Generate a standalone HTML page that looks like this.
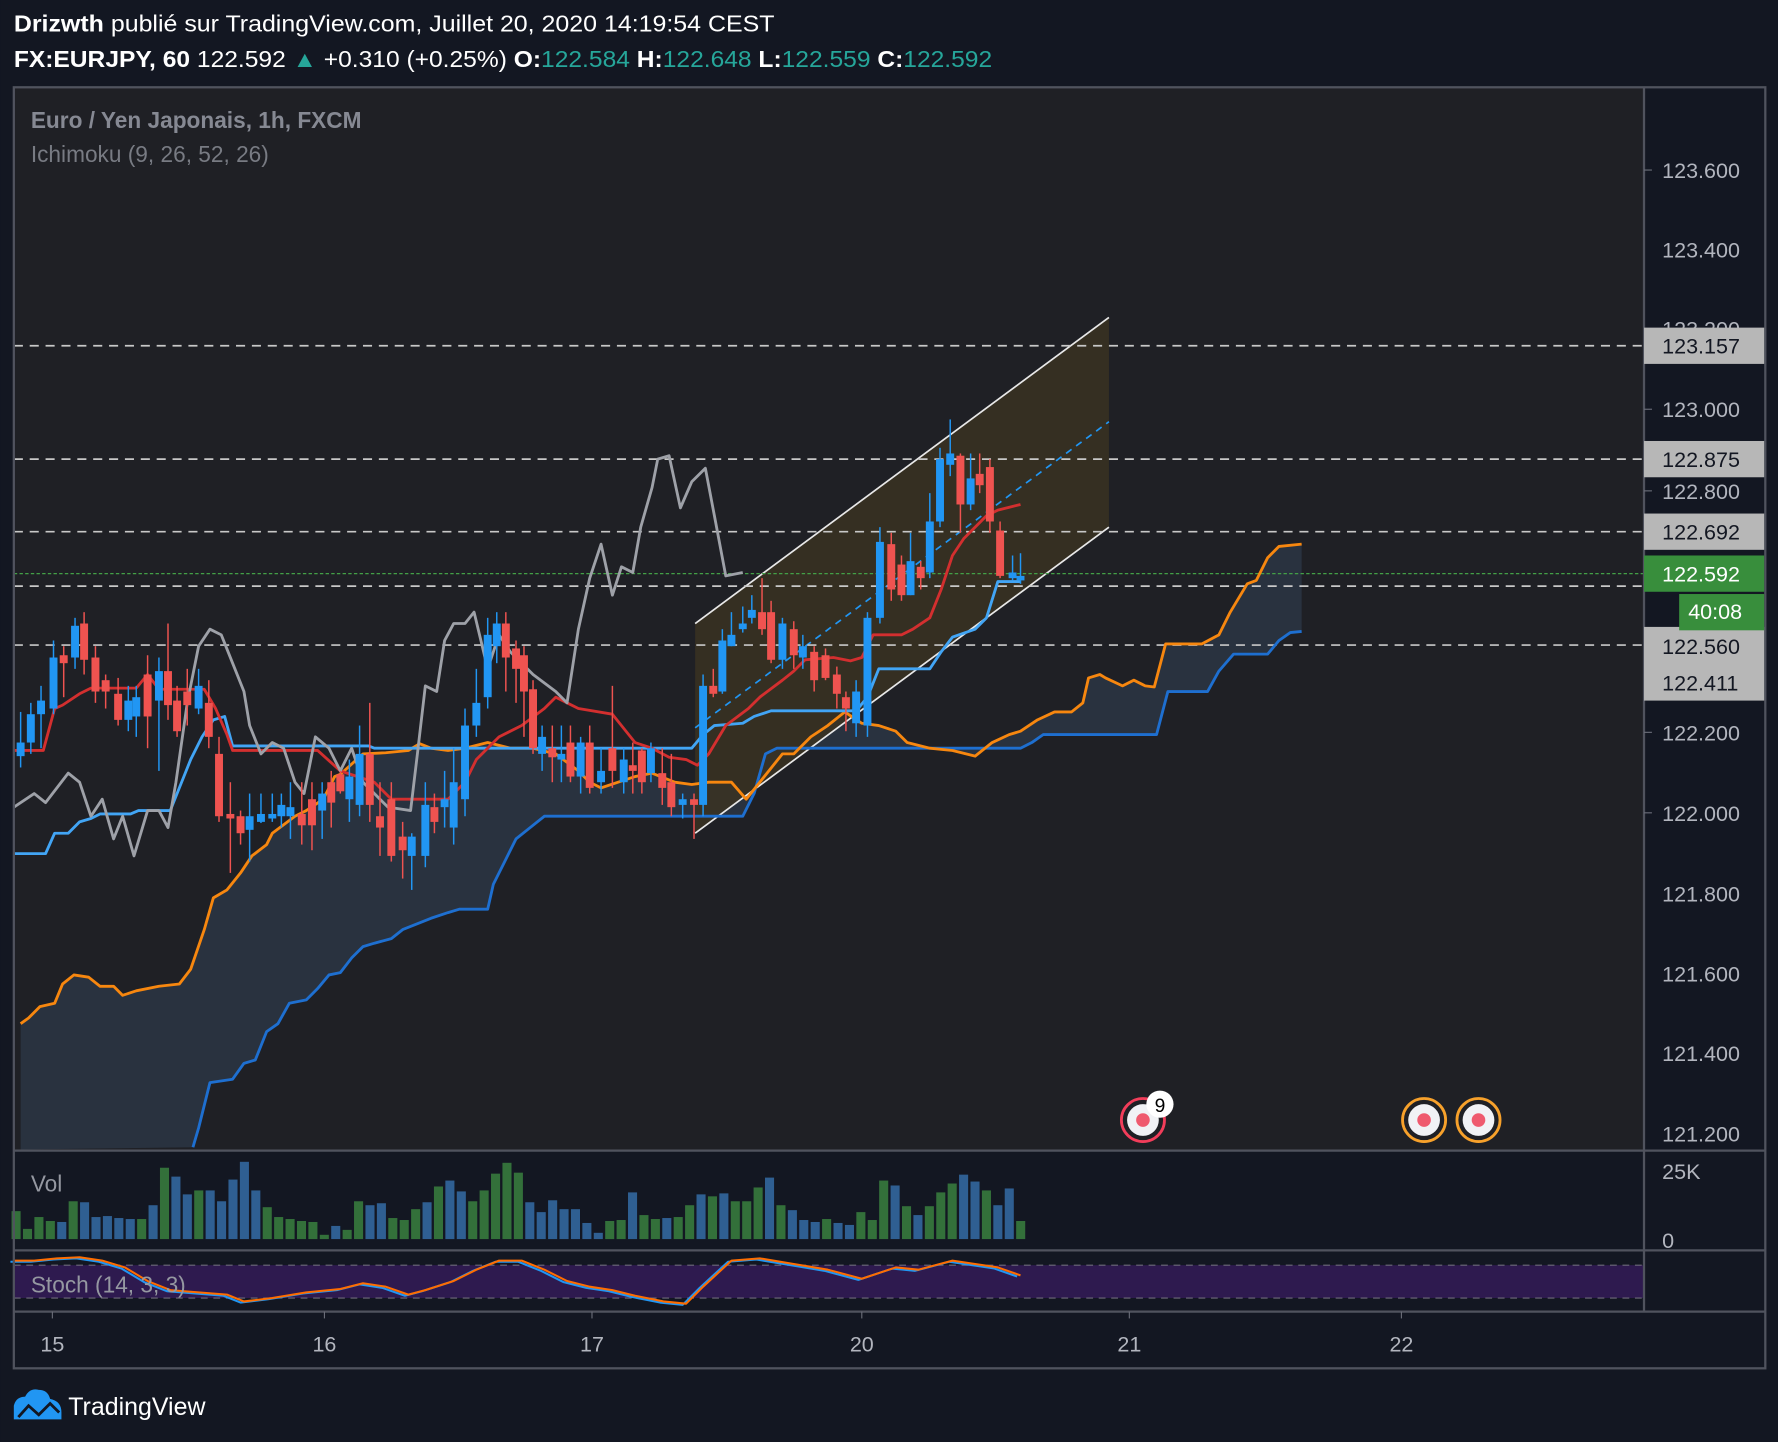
<!DOCTYPE html>
<html><head><meta charset="utf-8"><style>
html,body{margin:0;padding:0;background:#131722;width:1778px;height:1442px;overflow:hidden}
svg{display:block}
text{font-family:"Liberation Sans",sans-serif}
</style></head><body>
<svg id="s" width="1778" height="1442" viewBox="0 0 1568 1272" xmlns="http://www.w3.org/2000/svg">
<rect width="1568" height="1272" fill="#131722"/>
<text x="12" y="28" font-size="20" fill="#fff" textLength="671" lengthAdjust="spacingAndGlyphs"><tspan font-weight="bold">Drizwth</tspan> publié sur TradingView.com, Juillet 20, 2020 14:19:54 CEST</text>
<text x="12" y="59" font-size="20" fill="#fff" textLength="863" lengthAdjust="spacingAndGlyphs"><tspan font-weight="bold">FX:EURJPY, 60</tspan> 122.592 <tspan fill="#26a69a">▲</tspan> +0.310 (+0.25%) <tspan font-weight="bold">O:</tspan><tspan fill="#26a69a">122.584</tspan> <tspan font-weight="bold">H:</tspan><tspan fill="#26a69a">122.648</tspan> <tspan font-weight="bold">L:</tspan><tspan fill="#26a69a">122.559</tspan> <tspan font-weight="bold">C:</tspan><tspan fill="#26a69a">122.592</tspan></text>

<!-- panes -->
<rect x="12" y="77" width="1438" height="938" fill="#1f2025"/>
<rect x="12" y="1015" width="1438" height="88" fill="#131722"/>
<rect x="12" y="1103" width="1438" height="54" fill="#131722"/>
<rect x="12" y="1116" width="1438" height="29" fill="#2e1a4f"/>
<line x1="12" y1="1116" x2="1450" y2="1116" stroke="#6d6a7a" stroke-dasharray="6 5"/>
<line x1="12" y1="1145" x2="1450" y2="1145" stroke="#6d6a7a" stroke-dasharray="6 5"/>

<g id="cloud"></g>
<!-- channel -->
<polygon points="613,550 978,280 978,465 613,735" fill="#3a3322" opacity="0.85"/>
<line x1="613" y1="550" x2="978" y2="280" stroke="#e8e8e8" stroke-width="1.5"/>
<line x1="613" y1="735" x2="978" y2="465" stroke="#e8e8e8" stroke-width="1.5"/>
<line x1="613" y1="642" x2="978" y2="372" stroke="#2196f3" stroke-width="1.5" stroke-dasharray="6 5"/>

<g stroke="#c8c8c8" stroke-width="1.5" stroke-dasharray="8 6">
<line x1="12" y1="305" x2="1450" y2="305"/><line x1="12" y1="405" x2="1450" y2="405"/>
<line x1="12" y1="469" x2="1450" y2="469"/><line x1="12" y1="517" x2="1450" y2="517"/>
<line x1="12" y1="569" x2="1450" y2="569"/></g>
<line x1="12" y1="506" x2="1450" y2="506" stroke="#43a047" stroke-width="1" stroke-dasharray="3 2"/>

<g id="lines"></g>
<g id="candles"></g>
<g id="vol"></g>

<text x="27" y="113" font-size="20" font-weight="bold" fill="#868993">Euro / Yen Japonais, 1h, FXCM</text>
<text x="27" y="143" font-size="20" fill="#787b83">Ichimoku (9, 26, 52, 26)</text>
<text x="27" y="1051" font-size="20" fill="#9598a1">Vol</text>
<text x="27" y="1140" font-size="20" fill="#9598a1">Stoch (14, 3, 3)</text>

<!-- events -->
<g><circle cx="1008" cy="988" r="19" fill="none" stroke="#f23d5a" stroke-width="2.5"/><circle cx="1008" cy="988" r="14" fill="#f1f2f5"/><circle cx="1008" cy="988" r="6" fill="#ef5a6e"/>
<circle cx="1023" cy="974" r="12" fill="#fff"/><text x="1023" y="981" font-size="17" text-anchor="middle" fill="#000">9</text></g>
<g><circle cx="1256" cy="988" r="19" fill="none" stroke="#f7a12b" stroke-width="2.5"/><circle cx="1256" cy="988" r="14" fill="#f1f2f5"/><circle cx="1256" cy="988" r="6" fill="#ef5a6e"/></g>
<g><circle cx="1304" cy="988" r="19" fill="none" stroke="#f7a12b" stroke-width="2.5"/><circle cx="1304" cy="988" r="14" fill="#f1f2f5"/><circle cx="1304" cy="988" r="6" fill="#ef5a6e"/></g>

<!-- frames -->
<g fill="none" stroke="#50535e" stroke-width="2">
<rect x="12" y="77" width="1545" height="1130"/>
<line x1="12" y1="1015" x2="1557" y2="1015"/><line x1="12" y1="1103" x2="1557" y2="1103"/><line x1="12" y1="1157" x2="1557" y2="1157"/>
<line x1="1450" y1="77" x2="1450" y2="1157"/>
</g>

<!-- axis labels -->
<g font-size="19" fill="#b2b5be">
<text x="1466" y="157">123.600</text><text x="1466" y="227">123.400</text><text x="1466" y="297">123.200</text>
<text x="1466" y="368">123.000</text><text x="1466" y="440">122.800</text><text x="1466" y="653">122.200</text>
<text x="1466" y="724">122.000</text><text x="1466" y="795">121.800</text><text x="1466" y="866">121.600</text>
<text x="1466" y="936">121.400</text><text x="1466" y="1007">121.200</text>
<text x="1466" y="1040">25K</text><text x="1466" y="1101">0</text>
</g>
<g stroke="#6a6d78"><line x1="1450" y1="150" x2="1457" y2="150"/><line x1="1450" y1="361" x2="1457" y2="361"/><line x1="1450" y1="433" x2="1457" y2="433"/><line x1="1450" y1="646" x2="1457" y2="646"/><line x1="1450" y1="717" x2="1457" y2="717"/></g>
<g font-size="19" fill="#131722">
<rect x="1450" y="289" width="106" height="32" fill="#b7b7b7"/><text x="1466" y="312">123.157</text>
<rect x="1450" y="389" width="106" height="32" fill="#b7b7b7"/><text x="1466" y="412">122.875</text>
<rect x="1450" y="453" width="106" height="32" fill="#b7b7b7"/><text x="1466" y="476">122.692</text>
<rect x="1450" y="553" width="106" height="65" fill="#b7b7b7"/><text x="1466" y="577">122.560</text><text x="1466" y="609">122.411</text>
<rect x="1450" y="490" width="106" height="32" fill="#388e3c"/><text x="1466" y="513" fill="#fff">122.592</text>
<rect x="1481" y="524" width="75" height="32" fill="#388e3c"/><text x="1489" y="546" fill="#fff">40:08</text>
</g>

<!-- time axis -->
<g font-size="19" fill="#b2b5be" text-anchor="middle">
<text x="46" y="1192">15</text><text x="286" y="1192">16</text><text x="522" y="1192">17</text>
<text x="760" y="1192">20</text><text x="996" y="1192">21</text><text x="1236" y="1192">22</text></g>
<g stroke="#6a6d78"><line x1="46" y1="1157" x2="46" y2="1163"/><line x1="286" y1="1157" x2="286" y2="1163"/><line x1="522" y1="1157" x2="522" y2="1163"/><line x1="760" y1="1157" x2="760" y2="1163"/><line x1="996" y1="1157" x2="996" y2="1163"/><line x1="1236" y1="1157" x2="1236" y2="1163"/></g>

<!-- logo -->
<path d="M12,1252 L12,1240 Q14,1232 22,1232 Q26,1224 34,1226 Q42,1226 44,1234 Q54,1236 54,1246 L54,1252 Z" fill="#2196f3"/>
<polyline points="16,1250 25,1240 34,1248 44,1238 52,1246" fill="none" stroke="#131722" stroke-width="2.5"/>
<text x="60" y="1248" font-size="22" fill="#fff">TradingView</text>
</svg>
<script>
var NS="http://www.w3.org/2000/svg";
function el(p,t,a){var e=document.createElementNS(NS,t);for(var k in a)e.setAttribute(k,a[k]);document.getElementById(p).appendChild(e);return e;}
function pl(p,pts,c,w){el(p,"polyline",{points:pts,fill:"none",stroke:c,"stroke-width":w||2.5,"stroke-linejoin":"round"});}
var A="18,903 25,898 35,888 48,885 55,868 65,860 78,862 88,870 100,870 108,878 120,874 140,870 158,868 168,855 180,820 188,792 200,785 212,770 222,755 235,745 240,735 260,720 270,715 285,705 295,685 300,683 320,665 340,664 360,662 370,656 380,660 395,662 410,660 430,655 450,660 470,660 490,665 510,680 520,690 530,695 545,690 560,685 575,682 595,690 610,692 625,690 645,690 658,705 690,665 700,665 715,650 730,640 745,628 760,638 775,640 790,645 800,655 820,660 840,662 860,667 875,655 890,648 900,645 915,635 930,628 945,628 955,620 960,598 970,595 975,598 990,605 1000,600 1010,605 1018,606 1028,568 1060,568 1075,560 1085,540 1100,515 1108,512 1118,492 1128,482 1148,480";
var B="170,1012 175,995 185,955 205,952 215,938 225,935 235,910 245,903 255,885 270,882 280,872 290,860 300,858 310,845 320,835 330,832 345,828 355,820 370,814 380,810 395,805 405,802 430,802 435,780 445,760 455,740 465,732 480,720 500,720 560,720 610,720 655,720 665,700 675,665 685,660 880,660 900,660 910,655 920,648 1020,648 1030,610 1065,610 1075,592 1088,577 1118,577 1128,565 1138,558 1148,557";
el("cloud","polygon",{points:A+" "+B.split(" ").reverse().join(" ")+" 18,1014",fill:"#2a3443",opacity:"0.9"});
pl("lines",B,"#1e6fd0",2.5);
pl("lines",A,"#f7870f",2.5);
pl("lines","12,753 40,753 48,735 60,735 70,725 80,722 88,718 115,718 122,715 150,715 158,695 168,670 178,650 188,635 198,632 205,658 325,658 330,660 610,660 620,648 630,640 655,638 665,632 680,627 755,627 765,615 775,590 820,590 830,575 840,562 860,555 870,545 880,513 900,513","#42a5f5",2.5);
pl("lines","12,662 38,662 48,625 55,622 70,612 80,607 120,607 130,595 140,608 180,608 190,625 200,648 205,662 280,662 300,680 330,690 345,705 395,705 410,690 420,670 440,650 460,640 480,625 490,615 510,625 540,630 560,655 575,660 590,668 605,670 615,675 625,665 640,640 660,625 670,615 690,600 700,592 710,582 735,580 750,583 760,580 770,560 795,560 805,555 820,545 830,520 840,490 850,475 860,465 870,455 880,450 900,445","#d32f2f",2.5);
pl("lines","12,712 30,700 40,708 50,695 60,682 70,690 80,720 90,705 100,740 108,720 118,755 130,715 140,715 148,730 155,690 165,620 175,570 185,555 195,560 205,585 215,610 220,640 230,665 240,655 250,660 260,690 268,700 278,650 290,660 300,680 310,660 320,690 330,700 342,712 362,715 368,665 375,605 385,610 392,565 400,550 410,550 418,540 430,590 440,560 450,575 470,595 490,610 500,620 510,555 520,510 530,480 540,525 548,500 558,505 565,465 575,430 580,405 590,402 600,448 610,425 622,413 630,455 640,508 655,505","#9ea1a8",2.5);
var C="18 b 655 667 628 677|27 b 630 655 620 665|36 b 618 630 605 660|47 b 580 625 565 630|56 r 578 585 570 615|66 b 552 580 545 590|74 r 550 582 540 595|84 r 580 610 570 620|93 r 600 610 595 625|104 r 612 635 598 640|113 b 618 635 605 645|120 b 615 632 605 650|130 r 595 632 578 660|140 b 592 618 580 680|148 r 592 622 550 635|156 r 618 645 605 650|165 r 610 622 590 640|175 b 605 625 590 630|184 r 620 650 600 660|193 r 665 720 650 725|203 r 718 722 690 770|212 r 720 735 715 745|220 b 720 732 700 760|230 b 718 725 700 726|240 b 718 722 700 725|248 b 710 720 700 730|256 b 712 720 690 740|266 r 718 728 690 745|275 r 705 728 690 750|284 b 700 715 690 740|292 r 690 708 680 730|300 r 683 698 680 700|308 b 685 705 670 725|317 b 665 710 640 720|326 r 665 710 620 725|335 r 720 730 690 755|345 r 705 755 690 760|355 r 738 750 725 775|363 b 738 755 735 785|375 b 710 755 690 765|383 r 712 725 700 735|392 b 705 712 680 730|400 b 690 730 660 745|410 b 640 705 625 720|420 b 620 640 590 650|430 b 560 615 545 625|438 b 550 570 540 585|446 r 550 580 540 610|455 r 572 590 565 620|462 r 578 610 570 650|470 r 608 660 600 665|478 b 650 665 640 680|487 r 660 668 640 690|495 b 665 670 640 690|503 r 655 685 640 690|512 b 655 685 650 700|520 r 655 695 640 700|530 b 680 690 660 700|540 r 660 680 605 695|550 b 670 690 660 700|558 r 675 680 655 700|566 r 662 690 660 700|574 b 660 682 655 690|584 r 682 695 660 710|592 r 690 712 665 720|602 b 705 710 700 722|612 r 705 710 700 740|620 b 605 710 595 720|629 r 605 612 590 615|637 b 565 610 555 612|645 b 560 570 540 570|655 b 550 555 535 558|663 b 538 545 525 550|672 r 540 555 510 560|680 r 540 582 530 585|690 b 550 582 545 590|700 r 555 578 548 590|708 b 570 580 560 590|718 r 575 600 570 610|728 r 578 598 572 600|738 r 595 612 588 625|746 r 615 625 610 645|755 b 610 638 600 650|765 b 545 640 540 650|776 b 478 545 465 550|786 r 480 520 470 530|795 r 498 525 490 530|803 b 495 525 470 525|812 r 500 510 495 520|820 b 460 505 435 510|829 b 405 460 395 465|838 b 400 410 370 420|847 r 402 445 400 470|856 b 422 445 400 450|864 r 418 428 400 435|873 r 412 460 405 470|882 r 468 508 460 510|893 b 505 510 490 512|900 b 508 512 488 515";
C.split("|").forEach(function(s){var a=s.split(" "),x=+a[0],c=a[1]=="b"?"#2196f3":"#ef5350";
el("candles","line",{x1:x,x2:x,y1:a[4],y2:a[5],stroke:c,"stroke-width":1.3});
el("candles","rect",{x:x-3.5,y:a[2],width:7,height:Math.max(2,a[3]-a[2]),fill:c});});
var V="g213 g267 g231 g243 b246 g183 b186 b231 b228 b234 b237 g237 b195 g81 b108 b162 g150 b150 b183 b117 b63 b150 g201 g231 g237 g243 g246 g285 b258 g270 g183 b195 b189 g234 g240 g207 b186 g138 b120 b153 g183 g150 g99 g66 g96 b186 b216 b180 b207 b207 b249 b279 g243 g240 b156 g225 g237 b234 g231 g195 b162 g168 b159 g183 g183 g141 b111 g195 b210 b240 b246 g237 b249 b255 g216 g240 g120 b135 g198 b225 g198 g156 g129 b102 b123 g150 b195 b144 g243".split(" ");
V.forEach(function(v,i){var h=(298-(+v.slice(1)))*0.29,x=14+i*10.07;
el("vol","rect",{x:x-4,y:1093-h,width:8,height:h,fill:v[0]=="g"?"#33703a":"#2f5f92"});});
var S="12,1112 30,1112 50,1110 70,1109 90,1112 110,1118 130,1130 150,1138 175,1140 200,1142 215,1148 240,1145 270,1140 300,1137 320,1132 340,1135 360,1142 375,1138 400,1130 420,1120 440,1112 460,1112 480,1120 500,1130 520,1135 540,1138 560,1143 585,1148 605,1150 620,1135 645,1112 670,1110 700,1115 730,1120 760,1128 790,1118 810,1120 840,1112 860,1115 880,1118 900,1125";
pl("vol",S.split(" ").map(function(p){var q=p.split(",");return (+q[0]-3)+","+(+q[1]+1);}).join(" "),"#2196f3",1.8);
pl("vol",S,"#ff6d00",1.8);
</script>
</body></html>
